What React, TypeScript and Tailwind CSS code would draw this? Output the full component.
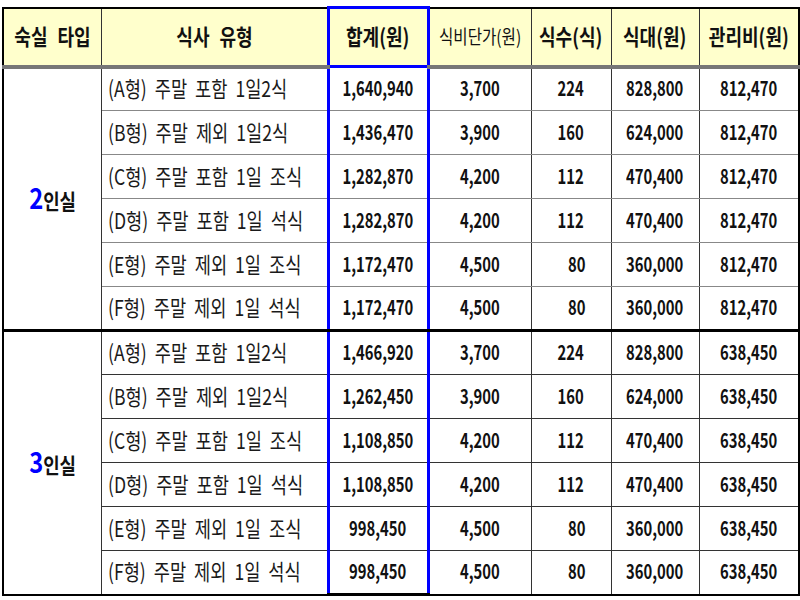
import React from "react";

type Row = { type: string; total: string; unit: string; count: string; food: string; mgmt: string };

const group1: Row[] = [
  { type: "(A형) 주말 포함 1일2식", total: "1,640,940", unit: "3,700", count: "224", food: "828,800", mgmt: "812,470" },
  { type: "(B형) 주말 제외 1일2식", total: "1,436,470", unit: "3,900", count: "160", food: "624,000", mgmt: "812,470" },
  { type: "(C형) 주말 포함 1일 조식", total: "1,282,870", unit: "4,200", count: "112", food: "470,400", mgmt: "812,470" },
  { type: "(D형) 주말 포함 1일 석식", total: "1,282,870", unit: "4,200", count: "112", food: "470,400", mgmt: "812,470" },
  { type: "(E형) 주말 제외 1일 조식", total: "1,172,470", unit: "4,500", count: "80", food: "360,000", mgmt: "812,470" },
  { type: "(F형) 주말 제외 1일 석식", total: "1,172,470", unit: "4,500", count: "80", food: "360,000", mgmt: "812,470" },
];

const group2: Row[] = [
  { type: "(A형) 주말 포함 1일2식", total: "1,466,920", unit: "3,700", count: "224", food: "828,800", mgmt: "638,450" },
  { type: "(B형) 주말 제외 1일2식", total: "1,262,450", unit: "3,900", count: "160", food: "624,000", mgmt: "638,450" },
  { type: "(C형) 주말 포함 1일 조식", total: "1,108,850", unit: "4,200", count: "112", food: "470,400", mgmt: "638,450" },
  { type: "(D형) 주말 포함 1일 석식", total: "1,108,850", unit: "4,200", count: "112", food: "470,400", mgmt: "638,450" },
  { type: "(E형) 주말 제외 1일 조식", total: "998,450", unit: "4,500", count: "80", food: "360,000", mgmt: "638,450" },
  { type: "(F형) 주말 제외 1일 석식", total: "998,450", unit: "4,500", count: "80", food: "360,000", mgmt: "638,450" },
];

const font = { fontFamily: '"Noto Sans CJK KR", "Noto Sans", sans-serif' };

function N({ children }: { children: React.ReactNode }) {
  return <span className="inline-block scale-x-[0.74] font-bold text-[20px] leading-none text-[#111]">{children}</span>;
}

function Group({ rows, label, first }: { rows: Row[]; label: string; first: boolean }) {
  const sep = first ? "border-b border-b-[#888]" : "border-b border-b-[#333]";
  return (
    <>
      {rows.map((r, i) => {
        const last = i === rows.length - 1;
        const rowB = last ? (first ? "border-b-[3px] border-b-black" : "border-b-2 border-b-black") : sep;
        return (
          <tr key={i} className="h-[44px]">
            {i === 0 && (
              <td rowSpan={rows.length} className={`border-l-2 border-l-black border-r border-r-[#333] text-center align-middle ${first ? "border-b-[3px] border-b-black" : "border-b-2 border-b-black"}`}>
                <span className="inline-block scale-x-[0.85] font-bold leading-none">
                  <span className="text-[28px] text-[#0000ff]">{label}</span>
                  <span className="text-[21px] text-[#111]">인실</span>
                </span>
              </td>
            )}
            <td className={`border-r border-r-[#333] pl-[6px] text-left ${rowB}`}>
              <span className="inline-block origin-left scale-x-[0.8] text-[22px] leading-none text-[#1a1a1a] whitespace-nowrap [word-spacing:5px]">{r.type}</span>
            </td>
            <td className={`border-x-[3px] border-x-[#0000ff] text-center ${rowB} ${last && !first ? "border-b-[3px] border-b-[#0000ff]" : ""}`}>
              <N>{r.total}</N>
            </td>
            <td className={`border-r border-r-[#333] text-center ${rowB}`}><N>{r.unit}</N></td>
            <td className={`border-r border-r-[#333] text-right pr-[22px] ${rowB}`}><N>{r.count}</N></td>
            <td className={`border-r border-r-[#333] text-center ${rowB}`}><N>{r.food}</N></td>
            <td className={`border-r-2 border-r-black text-center ${rowB}`}><N>{r.mgmt}</N></td>
          </tr>
        );
      })}
    </>
  );
}

function H({ children, small }: { children: React.ReactNode; small?: boolean }) {
  return (
    <span className={`inline-block scale-x-[0.82] leading-none whitespace-nowrap text-[#111] [word-spacing:7px] ${small ? "text-[19px] font-normal" : "text-[22px] font-bold"}`}>
      {children}
    </span>
  );
}

export default function App() {
  return (
    <div className="w-[800px] h-[600px] bg-white overflow-hidden pl-[2px] pt-[6px]" style={font}>
      <table className="table-fixed border-collapse w-[796px]">
        <colgroup>
          <col className="w-[98px]" />
          <col className="w-[227px]" />
          <col className="w-[100px]" />
          <col className="w-[103px]" />
          <col className="w-[80px]" />
          <col className="w-[88px]" />
          <col className="w-[100px]" />
        </colgroup>
        <thead>
          <tr className="h-[59px] bg-[#ffffcc]">
            <th className="border-2 border-black border-b-[4px] border-b-[#777] border-r border-r-[#333] text-center"><H>숙실 타입</H></th>
            <th className="border-t-2 border-t-black border-b-[4px] border-b-[#777] border-r border-r-[#333] text-center"><H>식사 유형</H></th>
            <th className="border-[3px] border-[#0000ff] text-center"><H>합계(원)</H></th>
            <th className="border-t-2 border-t-black border-b-[4px] border-b-[#777] border-r border-r-[#333] text-center"><H small>식비단가(원)</H></th>
            <th className="border-t-2 border-t-black border-b-[4px] border-b-[#777] border-r border-r-[#333] text-center"><H>식수(식)</H></th>
            <th className="border-t-2 border-t-black border-b-[4px] border-b-[#777] border-r border-r-[#333] text-center"><H>식대(원)</H></th>
            <th className="border-t-2 border-t-black border-b-[4px] border-b-[#777] border-r-2 border-r-black text-center"><H>관리비(원)</H></th>
          </tr>
        </thead>
        <tbody>
          <Group rows={group1} label="2" first />
          <Group rows={group2} label="3" first={false} />
        </tbody>
      </table>
    </div>
  );
}
